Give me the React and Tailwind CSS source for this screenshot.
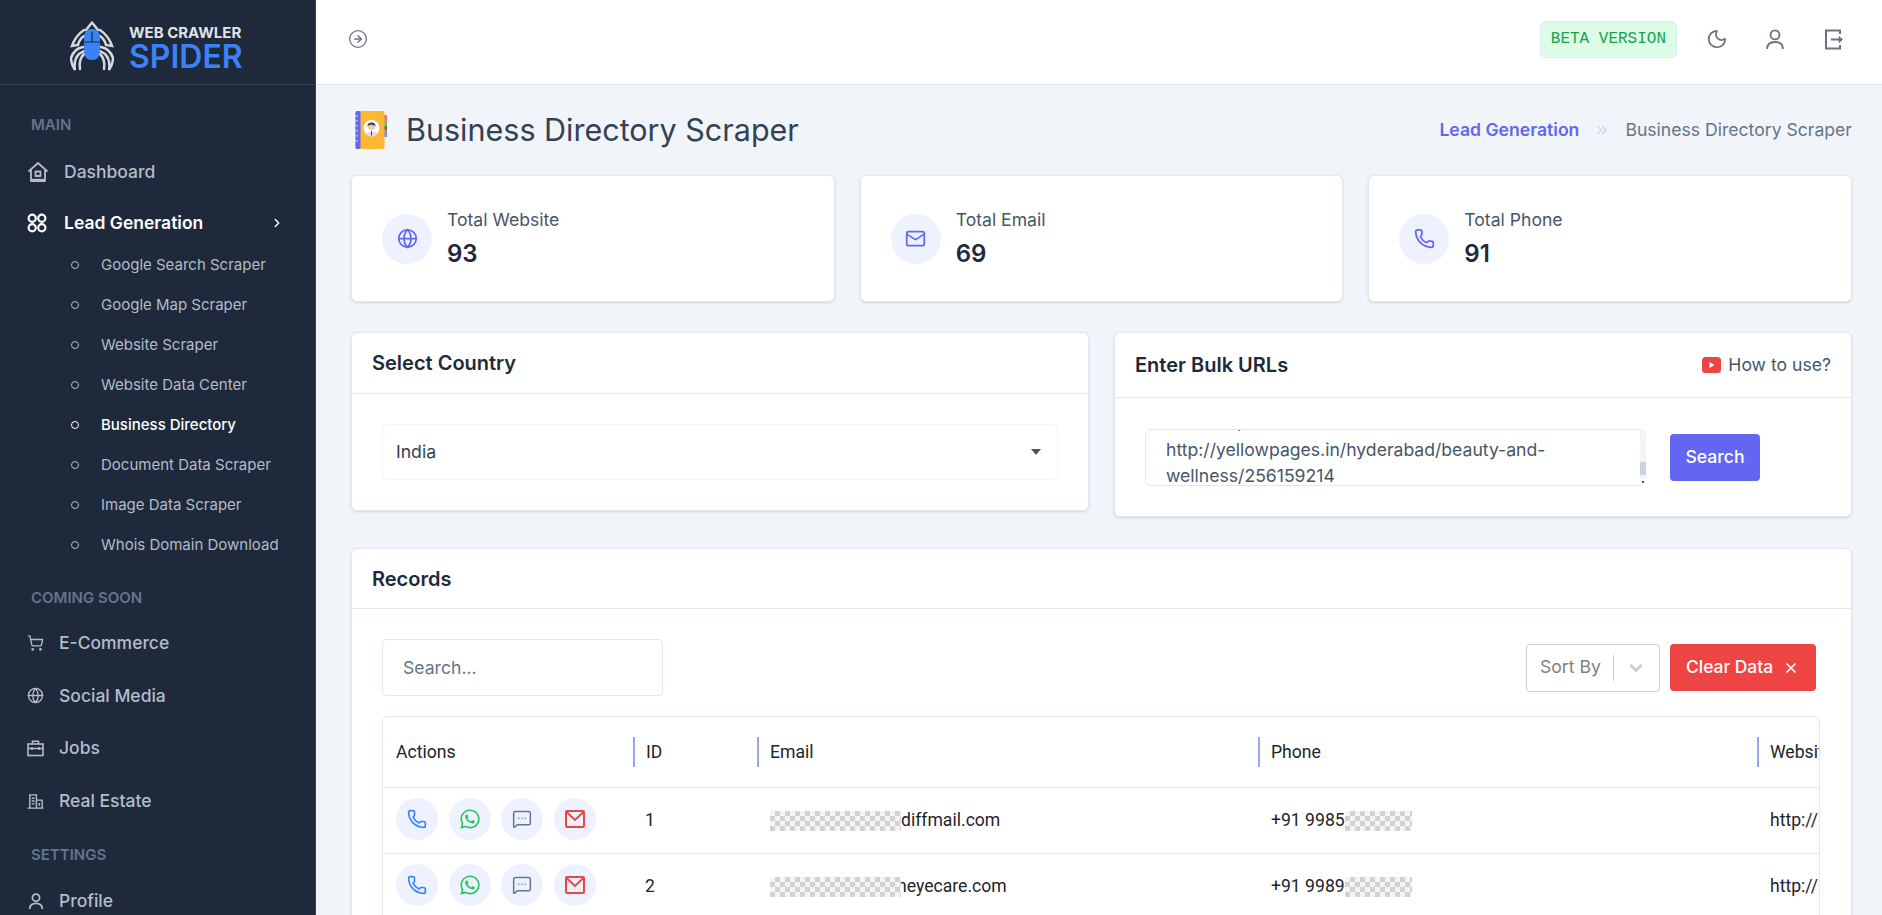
import React, { useEffect, useRef } from 'react';
import { CircleArrowRight, ChevronRight, ChevronsRight, ChevronDown, Globe, Mail, Moon, Phone, ShoppingCart, X, MessageSquareMore } from 'lucide-react';
import { FaWhatsapp } from 'react-icons/fa';

const SpiderLogo = () => (
  <svg width="44" height="50" viewBox="0 0 44 50" fill="none" strokeLinecap="round" className="mt-[7px]">
    <g stroke="#d5d9df" strokeWidth="2.5">
      <path d="M22 1.5 L16 9 M22 1.5 L28 9" />
      <path d="M14 9 C8 13 4 19 2 25 L8 24 C9 20 11 17 14 15" />
      <path d="M30 9 C36 13 40 19 42 25 L36 24 C35 20 33 17 30 15" />
      <path d="M13 26 C7 27 3 31 1 37 C1 42 3 46 5 49 C4 43 5 37 9 33 L14 30" />
      <path d="M31 26 C37 27 41 31 43 37 C43 42 41 46 39 49 C40 43 39 37 35 33 L30 30" />
      <path d="M14 33 C11 36 9 42 10 48" />
      <path d="M30 33 C33 36 35 42 34 48" />
    </g>
    <path d="M22 8 C14 8 14 14 14 19 L14 29 C14 36 17 39 22 39 C27 39 30 36 30 29 L30 19 C30 14 30 8 22 8 Z" fill="#3b82f6" />
    <path d="M14 21 H30 M22 11 V21" stroke="#1e293b" strokeWidth="1.2" />
  </svg>
);

const HomeIcon = () => (
  <svg width="22" height="22" viewBox="0 0 22 22" fill="none" stroke="currentColor" strokeWidth="1.8" strokeLinejoin="round">
    <path d="M1.5 10.5 L11 2 L20.5 10.5 M4 9 V20 H18 V9" />
    <rect x="8.5" y="10.5" width="5" height="4.5" />
    <path d="M4 19 H18" strokeWidth="2.4" />
  </svg>
);

const RingsIcon = () => (
  <svg width="20" height="20" viewBox="0 0 20 20" fill="none" stroke="currentColor" strokeWidth="2.2">
    <circle cx="5.2" cy="5.2" r="3.6" />
    <circle cx="14.8" cy="5.2" r="3.6" />
    <circle cx="5.2" cy="14.8" r="3.6" />
    <circle cx="14.8" cy="14.8" r="3.6" />
  </svg>
);

const BagIcon = () => (
  <svg width="17" height="17" viewBox="0 0 17 17" fill="none" stroke="currentColor" strokeWidth="1.6">
    <rect x="1" y="4" width="15" height="11.5" />
    <path d="M5.5 4 V1.2 H11.5 V4 M1 8.5 H16 M5 7 V10 M12 7 V10" />
  </svg>
);

const BuildingIcon = () => (
  <svg width="18" height="17" viewBox="0 0 18 17" fill="none" stroke="currentColor" strokeWidth="1.5">
    <path d="M0.5 15.5 H17.5 M3 15.5 V1.5 H10 V15.5 M10 7 H16 V15.5 M5 5 H8 M5 8 H8 M5 11 H8 M13 10 V13" />
  </svg>
);

const UserIcon = ({ size = 17, stroke = 1.9 }) => (
  <svg width={size} height={size} viewBox="0 0 17 17" fill="none" stroke="currentColor" strokeWidth={stroke}>
    <circle cx="8.5" cy="5" r="3.8" />
    <path d="M1.8 17 C1.8 13 4.5 11 8.5 11 C12.5 11 15.2 13 15.2 17" />
  </svg>
);

const LogoutIcon = () => (
  <svg width="20" height="21" viewBox="0 0 20 21" fill="none" stroke="currentColor" strokeWidth="2">
    <path d="M16 5 V1.5 H2 V19.5 H16 V16" />
    <path d="M7 10.5 H18" />
    <path d="M15 7.5 L18.5 10.5 L15 13.5 Z" fill="currentColor" strokeWidth="0.8" />
  </svg>
);

const MailSquareIcon = () => (
  <svg width="20" height="20" viewBox="0 0 20 20" fill="none" stroke="#ef4444" strokeWidth="2">
    <rect x="1" y="2" width="18" height="16" rx="1" />
    <path d="M1.5 3 L10 11 L18.5 3" />
  </svg>
);

const DirectoryIcon = () => (
  <svg width="32" height="38" viewBox="0 0 32 38">
    <rect x="28" y="4" width="4" height="6" fill="#f87171" />
    <rect x="28" y="10" width="4" height="5" fill="#34d399" />
    <rect x="28" y="15" width="4" height="4" fill="#a16207" />
    <rect x="28" y="19" width="4" height="7" fill="#818cf8" />
    <rect x="0.5" y="0" width="29" height="38" rx="2" fill="#fbb932" />
    <rect x="0.5" y="0" width="5" height="38" rx="1.5" fill="#6366f1" />
    <circle cx="16.5" cy="17" r="8" fill="#fff" />
    <path d="M10.5 23 C11.5 20 21.5 20 22.5 23 A8 8 0 0 1 10.5 23 Z" fill="#e7dbe2" />
    <circle cx="16.5" cy="15.5" r="3.6" fill="#f6c9a4" />
    <path d="M12.6 15.5 C11.8 10 21.2 10 20.4 15.5 C19 13.2 14 13.2 12.6 15.5 Z" fill="#374151" />
    <path d="M16 20 H17 V24.5 H16 Z" fill="#991b1b" />
    <g fill="#a5b4fc">
      <rect x="0" y="4" width="3" height="1.5" />
      <rect x="0" y="9" width="3" height="1.5" />
      <rect x="0" y="14" width="3" height="1.5" />
      <rect x="0" y="19" width="3" height="1.5" />
      <rect x="0" y="24" width="3" height="1.5" />
      <rect x="0" y="29" width="3" height="1.5" />
    </g>
  </svg>
);

const SectionLabel = ({ children, className = '' }) => (
  <div className={`pl-[31px] text-[15px] leading-5 font-semibold text-[#64748b] ${className}`}>{children}</div>
);

const subItems = [
  'Google Search Scraper',
  'Google Map Scraper',
  'Website Scraper',
  'Website Data Center',
  'Business Directory',
  'Document Data Scraper',
  'Image Data Scraper',
  'Whois Domain Download',
];

const comingSoon = [
  { label: 'E-Commerce', icon: <ShoppingCart size={18} strokeWidth={1.8} /> },
  { label: 'Social Media', icon: <Globe size={17} strokeWidth={1.9} /> },
  { label: 'Jobs', icon: <BagIcon /> },
  { label: 'Real Estate', icon: <BuildingIcon /> },
];

const Sidebar = () => (
  <aside className="w-[316px] shrink-0 h-full overflow-hidden bg-[#1e293b] border-r border-[#334155]">
    <div className="h-[85px] flex items-center pl-[70px] gap-[15px] border-b border-[#334155]">
      <SpiderLogo />
      <div className="flex flex-col mt-[14px]">
        <span className="text-[15px] leading-[16px] font-bold text-[#dfe3e8] whitespace-nowrap">WEB CRAWLER</span>
        <span className="text-[32px] leading-[32px] font-semibold text-[#3b82f6]">SPIDER</span>
      </div>
    </div>
    <SectionLabel className="mt-[30px]">MAIN</SectionLabel>
    <div className="mt-[27px] h-5 pl-[27px] flex items-center gap-[15px] text-[#b4bcc8] text-[17.5px] font-medium">
      <HomeIcon />
      <span>Dashboard</span>
    </div>
    <div className="mt-[31px] h-5 pl-[27px] pr-[31px] flex items-center gap-[17px] text-white text-[17.5px] font-semibold">
      <RingsIcon />
      <span className="flex-1">Lead Generation</span>
      <ChevronRight size={14} strokeWidth={2.5} />
    </div>
    <ul className="mt-[12px]">
      {subItems.map((item) => {
        const active = item === 'Business Directory';
        return (
          <li key={item} className={`h-10 pl-[71px] flex items-center gap-[22px] text-[15px] ${active ? 'text-white font-medium' : 'text-[#b4bcc8]'}`}>
            <span className="w-2 h-2 rounded-full border border-current" />
            <span>{item}</span>
          </li>
        );
      })}
    </ul>
    <SectionLabel className="mt-[23px]">COMING SOON</SectionLabel>
    <ul className="mt-[9px]">
      {comingSoon.map((item) => (
        <li key={item.label} className="h-[52.6px] pl-[27px] flex items-center gap-[15px] text-[#b4bcc8] text-[17.5px] font-medium">
          <span className="w-[17px] flex justify-center">{item.icon}</span>
          <span>{item.label}</span>
        </li>
      ))}
    </ul>
    <SectionLabel className="mt-[18px]">SETTINGS</SectionLabel>
    <div className="mt-[26px] h-5 pl-[28px] flex items-center gap-[15px] text-[#b4bcc8] text-[17.5px] font-medium">
      <UserIcon size={16} />
      <span>Profile</span>
    </div>
  </aside>
);

const Topbar = () => (
  <header className="h-[85px] shrink-0 bg-white border-b border-[#e2e8f0] flex items-center pl-[32px] pr-[38px] pb-[6px]">
    <CircleArrowRight size={20} strokeWidth={1.6} className="text-[#6b7280]" />
    <div className="ml-auto flex items-center text-[#6b7280]">
      <div className="h-[37px] px-[10px] flex items-center rounded-md bg-[#dcfce7] border border-[#dbeafe] text-[#16a34a] text-[16px] font-['Liberation_Mono',monospace]">
        BETA VERSION
      </div>
      <Moon size={22} strokeWidth={1.9} className="ml-[29px]" />
      <span className="ml-[37px]"><UserIcon size={20} stroke={1.6} /></span>
      <span className="ml-[39px]"><LogoutIcon /></span>
    </div>
  </header>
);

const StatCard = ({ icon, label, value }) => (
  <div className="h-[127px] bg-white border border-[#e2e8f0] rounded-md shadow-sm flex items-center pl-[30px] gap-[15px]">
    <div className="w-[50px] h-[50px] rounded-full bg-[#eef2ff] flex items-center justify-center text-[#6366f1]">{icon}</div>
    <div>
      <div className="text-[17.6px] leading-6 text-[#475569]">{label}</div>
      <div className="mt-[6px] text-[24px] leading-8 font-semibold text-[#1e293b]">{value}</div>
    </div>
  </div>
);

const CardTitle = ({ children }) => <h2 className="text-[20px] leading-7 font-semibold text-[#1e293b]">{children}</h2>;

const BulkUrls = () => {
  const ref = useRef(null);
  useEffect(() => {
    if (ref.current) ref.current.scrollTop = 46;
  }, []);
  return (
    <div className="relative w-[501px] h-[57px]">
      <textarea
        ref={ref}
        readOnly
        value={'http://yellowpages.in/hyderabad/beauty-and-wellness/256159201\nhttp://yellowpages.in/hyderabad/beauty-and-wellness/256159214'}
        className="block w-full h-full px-5 py-0 border border-[#e2e8f0] rounded-md text-[17.6px] leading-[26.4px] text-[#475569] outline-none resize-none overflow-y-scroll"
      />
      {/* scrollbar strip, the headless browser hides the native one */}
      <div className="absolute right-0 top-px bottom-px w-[6px] bg-[#f1f5f9] rounded-r-md">
        <div className="absolute left-0 right-0 top-[32px] h-[13px] bg-[#cbd5e1]" />
        <div className="absolute left-0 right-0 bottom-0 h-[6px] bg-white flex items-center justify-center">
          <span className="w-[2px] h-[2px] bg-[#475569]" />
        </div>
      </div>
    </div>
  );
};

const Checker = ({ width }) => (
  <span className={`relative z-10 inline-block h-[20px] align-middle bg-[repeating-conic-gradient(#d2d2d2_0_25%,#f5f5f5_0_50%)] bg-[length:10px_10px] ${width}`} />
);

const ActionBtn = ({ children }) => (
  <span className="w-[42px] h-[42px] rounded-full bg-[#eef2ff] flex items-center justify-center">{children}</span>
);

const rows = [
  { id: 1, email: 'diffmail.com', phone: '+91 9985' },
  { id: 2, email: 'neyecare.com', phone: '+91 9989' },
];

const RecordsTable = () => (
  <div className="overflow-hidden border border-[#e2e8f0] rounded-t-md font-['Roboto',sans-serif] text-[17.6px] text-[#212529]">
    <table className="table-fixed border-collapse w-[1800px] text-left">
      <colgroup>
        <col className="w-[250px]" />
        <col className="w-[124px]" />
        <col className="w-[501px]" />
        <col className="w-[499px]" />
        <col />
      </colgroup>
      <thead>
        <tr className="h-[70px] border-b border-[#e2e8f0]">
          <th className="pl-[13px] font-normal">Actions</th>
          {['ID', 'Email', 'Phone', 'Website'].map((h) => (
            <th key={h} className="font-normal p-0">
              <div className="h-[30px] flex items-center pl-[11px] border-l-2 border-[#9aa5f0]">{h}</div>
            </th>
          ))}
        </tr>
      </thead>
      <tbody>
        {rows.map((r) => (
          <tr key={r.id} className="h-[66px] border-b border-[#e2e8f0]">
            <td className="pl-[13px] pb-[2px]">
              <div className="flex gap-[10.5px]">
                <ActionBtn><Phone size={20} strokeWidth={2} className="text-[#3b82f6]" /></ActionBtn>
                <ActionBtn><FaWhatsapp size={22} className="text-[#22c55e]" /></ActionBtn>
                <ActionBtn><MessageSquareMore size={20} strokeWidth={1.8} className="text-[#64748b]" /></ActionBtn>
                <ActionBtn><MailSquareIcon /></ActionBtn>
              </div>
            </td>
            <td className="pl-[12px]">{r.id}</td>
            <td className="pl-[13px] whitespace-nowrap">
              <Checker width="w-[131px]" />
              <span className={r.id === 2 ? '-ml-1' : ''}>{r.email}</span>
            </td>
            <td className="pl-[13px] whitespace-nowrap">
              {r.phone}
              <Checker width="w-[67px]" />
            </td>
            <td className="pl-[13px]">http://</td>
          </tr>
        ))}
      </tbody>
    </table>
  </div>
);

export default function App() {
  return (
    <div className="h-screen w-full flex overflow-hidden bg-[#f1f5f9] font-['Inter',sans-serif]">
      <Sidebar />
      <div className="flex-1 min-w-0 flex flex-col">
        <Topbar />
        <main className="flex-1 overflow-hidden pl-[35px] pr-[30px]">
          <div className="h-[90px] flex items-center">
            <span className="ml-[4px]"><DirectoryIcon /></span>
            <h1 className="ml-[19px] text-[30.5px] font-normal text-[#334155]">Business Directory Scraper</h1>
            <div className="ml-auto flex items-center text-[17.6px]">
              <span className="font-semibold text-[#6366f1]">Lead Generation</span>
              <ChevronsRight size={16} className="mx-[15px] text-[#cbd5e1]" />
              <span className="text-[#64748b]">Business Directory Scraper</span>
            </div>
          </div>

          <div className="grid grid-cols-3 gap-[25px]">
            <StatCard icon={<Globe size={21} strokeWidth={2} />} label="Total Website" value="93" />
            <StatCard icon={<Mail size={21} strokeWidth={2} />} label="Total Email" value="69" />
            <StatCard icon={<Phone size={21} strokeWidth={2} />} label="Total Phone" value="91" />
          </div>

          <div className="mt-[30px] grid grid-cols-2 gap-[25px] items-start">
            <section className="bg-white border border-[#e2e8f0] rounded-md shadow-sm">
              <div className="h-[61px] flex items-center px-5 border-b border-[#e2e8f0]">
                <CardTitle>Select Country</CardTitle>
              </div>
              <div className="px-[30px] pt-[30px] pb-[30px]">
                <div className="relative">
                  <select defaultValue="India" className="w-full h-[56px] pl-[13px] border border-[#f1f5f9] rounded-md text-[17.6px] text-[#334155] appearance-none outline-none bg-white">
                    <option>India</option>
                  </select>
                  <span className="absolute right-[17px] top-[25px] w-0 h-0 border-x-[5.5px] border-x-transparent border-t-[6px] border-t-[#475569]" />
                </div>
              </div>
            </section>

            <section className="bg-white border border-[#e2e8f0] rounded-md shadow-sm">
              <div className="h-[65px] flex items-center justify-between px-5 border-b border-[#e2e8f0]">
                <CardTitle>Enter Bulk URLs</CardTitle>
                <div className="flex items-center gap-[7px] text-[17.6px] text-[#475569]">
                  <svg width="19" height="16" viewBox="0 0 19 16">
                    <rect width="19" height="16" rx="3.5" fill="#ef4444" />
                    <path d="M7.5 5 L12.5 8 L7.5 11 Z" fill="#fff" />
                  </svg>
                  <span>How to use?</span>
                </div>
              </div>
              <div className="pl-[30px] pt-[31px] pb-[30px] flex items-center gap-[24px]">
                <BulkUrls />
                <button className="w-[90px] h-[47px] rounded bg-[#6366f1] text-white text-[17.6px] font-medium">Search</button>
              </div>
            </section>
          </div>

          <section className="mt-[31px] bg-white border border-[#e2e8f0] rounded-t-md shadow-sm">
            <div className="h-[60px] flex items-center px-5 border-b border-[#e2e8f0]">
              <CardTitle>Records</CardTitle>
            </div>
            <div className="px-[30px] pt-[30px]">
              <div className="flex items-center">
                <input placeholder="Search..." className="w-[281px] h-[57px] px-5 border border-[#e2e8f0] rounded text-[17.6px] outline-none placeholder:text-[#64748b]" />
                <div className="ml-auto flex items-center gap-[10px] pr-[5px]">
                  <div className="w-[134px] h-[48px] border border-[#cccccc] rounded flex items-center pl-[13px] text-[17.6px] text-[#808080]">
                    <span>Sort By</span>
                    <span className="ml-[12px] w-px h-[26px] bg-[#cccccc]" />
                    <ChevronDown size={20} strokeWidth={3} className="ml-[12px] text-[#cccccc]" />
                  </div>
                  <button className="w-[146px] h-[47px] rounded bg-[#ef4444] text-white text-[17.4px] font-medium flex items-center pl-[16px] gap-[10px]">
                    Clear Data
                    <X size={16} strokeWidth={2.4} />
                  </button>
                </div>
              </div>
              <div className="mt-[20px] mr-[1px]">
                <RecordsTable />
              </div>
            </div>
          </section>
        </main>
      </div>
    </div>
  );
}
